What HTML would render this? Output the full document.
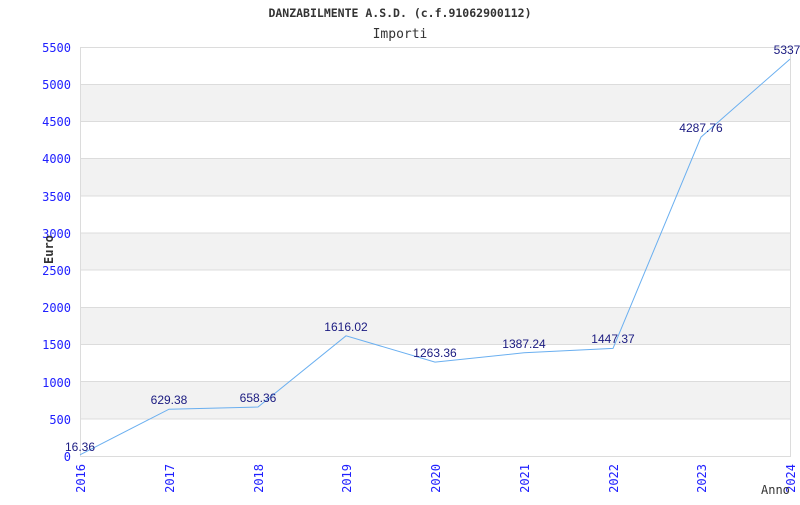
<!DOCTYPE html>
<html><head><style>body{margin:0;background:#fff}</style></head><body>
<svg width="800" height="500" xmlns="http://www.w3.org/2000/svg" font-family="DejaVu Sans Mono, monospace">
<rect width="800" height="500" fill="#fff"/>
<g fill="#f2f2f2">
<rect x="80" y="84.2" width="710" height="37.2"/>
<rect x="80" y="158.5" width="710" height="37.2"/>
<rect x="80" y="232.9" width="710" height="37.2"/>
<rect x="80" y="307.3" width="710" height="37.2"/>
<rect x="80" y="381.6" width="710" height="37.2"/>
</g>
<g stroke="#dcdcdc" stroke-width="1">
<line x1="80" y1="47.5" x2="790" y2="47.5"/>
<line x1="80" y1="84.5" x2="790" y2="84.5"/>
<line x1="80" y1="121.5" x2="790" y2="121.5"/>
<line x1="80" y1="158.5" x2="790" y2="158.5"/>
<line x1="80" y1="196" x2="790" y2="196"/>
<line x1="80" y1="233" x2="790" y2="233"/>
<line x1="80" y1="270" x2="790" y2="270"/>
<line x1="80" y1="307.5" x2="790" y2="307.5"/>
<line x1="80" y1="344.5" x2="790" y2="344.5"/>
<line x1="80" y1="381.5" x2="790" y2="381.5"/>
<line x1="80" y1="419" x2="790" y2="419"/>
<line x1="80" y1="456.5" x2="790" y2="456.5"/>
<line x1="80.5" y1="47" x2="80.5" y2="457"/>
<line x1="790.5" y1="47" x2="790.5" y2="457"/>
</g>
<polyline fill="none" stroke="#6aaff0" stroke-width="1" points="80,454.8 169,409.2 258,407 346,335.8 435,362.1 524,352.8 613,348.4 701,137.1 790,59.1"/>
<g font-family="Liberation Sans, Arial, sans-serif" font-size="12" fill="#1a1a80" text-anchor="middle">
<text x="80" y="451">16.36</text>
<text x="169" y="404">629.38</text>
<text x="258" y="402">658.36</text>
<text x="346" y="331">1616.02</text>
<text x="435" y="357">1263.36</text>
<text x="524" y="348">1387.24</text>
<text x="613" y="343">1447.37</text>
<text x="701" y="132">4287.76</text>
<text x="792" y="54">5337.1</text>
</g>
<g font-size="12" fill="#2020ff" text-anchor="end">
<text x="71" y="52">5500</text><text x="71" y="89">5000</text><text x="71" y="126">4500</text>
<text x="71" y="163">4000</text><text x="71" y="201">3500</text><text x="71" y="238">3000</text>
<text x="71" y="275">2500</text><text x="71" y="312">2000</text><text x="71" y="349">1500</text>
<text x="71" y="387">1000</text><text x="71" y="424">500</text><text x="71" y="461">0</text>
</g>
<g font-size="12" fill="#2020ff" text-anchor="end">
<text transform="translate(85,464) rotate(-90)">2016</text>
<text transform="translate(174,464) rotate(-90)">2017</text>
<text transform="translate(263,464) rotate(-90)">2018</text>
<text transform="translate(351,464) rotate(-90)">2019</text>
<text transform="translate(440,464) rotate(-90)">2020</text>
<text transform="translate(529,464) rotate(-90)">2021</text>
<text transform="translate(618,464) rotate(-90)">2022</text>
<text transform="translate(706,464) rotate(-90)">2023</text>
<text transform="translate(795,464) rotate(-90)">2024</text>
</g>
<text x="400" y="17" font-size="11.5" font-weight="bold" fill="#333" text-anchor="middle">DANZABILMENTE A.S.D. (c.f.91062900112)</text>
<text x="400" y="38" font-size="13" fill="#333" text-anchor="middle">Importi</text>
<text transform="translate(53,264) rotate(-90)" font-size="12" fill="#333" font-weight="bold">Euro</text>
<text x="761" y="494" font-size="12" fill="#333">Anno</text>
</svg>
</body></html>
